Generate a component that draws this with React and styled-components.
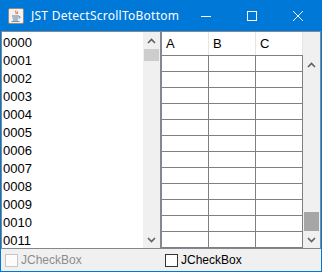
import React from "react";
import styled, { createGlobalStyle } from "styled-components";

const GlobalStyle = createGlobalStyle`
  html, body {
    margin: 0;
    padding: 0;
    background: #0078d7;
  }
  * {
    box-sizing: border-box;
  }
`;

const Frame = styled.div`
  width: 322px;
  height: 272px;
  border: 1px solid #0078d7;
  border-top: none;
  display: flex;
  flex-direction: column;
  background: #f0f0f0;
  font-family: "Liberation Sans", Arial, sans-serif;
`;

const TitleBar = styled.div`
  height: 31px;
  background: #0078d7;
  display: flex;
  align-items: center;
  color: #fff;
`;

const AppIcon = styled.div`
  width: 16px;
  height: 16px;
  margin: 0 7px 0 7px;
  display: flex;
`;

const Title = styled.div`
  flex: 1;
  font-family: "Noto Sans", "Open Sans", sans-serif;
  font-size: 12px;
  letter-spacing: 0.25px;
  white-space: nowrap;
  padding-bottom: 1px;
`;

const CaptionButton = styled.div`
  width: 46px;
  height: 31px;
  display: flex;
  align-items: center;
  justify-content: center;
`;

const Body = styled.div`
  flex: 1;
  display: flex;
  flex-direction: column;
`;

const Panes = styled.div`
  height: 218px;
  display: grid;
  grid-template-columns: 160px 160px;
`;

const ScrollPane = styled.div`
  border: 1px solid #828790;
  display: flex;
  overflow: hidden;
`;

const List = styled.div`
  flex: 1;
  background: #fff;
  overflow: hidden;
`;

const ListRow = styled.div`
  height: 18px;
  padding: 4px 0 0 1px;
  line-height: 14px;
  font-size: 13px;
  color: #000;
`;

const ScrollBar = styled.div`
  width: 17px;
  display: flex;
  flex-direction: column;
  background: #f0f0f0;
`;

const ArrowButton = styled.div`
  height: 17px;
  display: flex;
  align-items: center;
  justify-content: center;
`;

const Track = styled.div`
  flex: 1;
  display: flex;
  flex-direction: column;
  justify-content: ${(p) => (p.$atEnd ? "flex-end" : "flex-start")};
  padding: 0 1px;
`;

const Thumb = styled.div`
  height: ${(p) => p.$size}px;
  background: ${(p) => p.$color};
`;

const TableArea = styled.div`
  flex: 1;
  display: flex;
  flex-direction: column;
  overflow: hidden;
`;

const Header = styled.div`
  height: 24px;
  display: grid;
  grid-template-columns: 47px 47px 47px;
  background: #fff;
  border-bottom: 1px solid #808080;
`;

const HeaderCell = styled.div`
  padding-left: 4px;
  line-height: 23px;
  font-size: 13px;
  color: #000;
  border-right: 1px solid #e5e5e5;
`;

const Grid = styled.div`
  flex: 1;
  display: flex;
  flex-direction: column;
  justify-content: flex-end;
  background: #fff;
  overflow: hidden;
`;

const TableRow = styled.div`
  flex: none;
  height: 16px;
  display: grid;
  grid-template-columns: 47px 47px 47px;
  border-bottom: 1px solid #808080;
`;

const Cell = styled.div`
  border-right: 1px solid #808080;
`;

const Corner = styled.div`
  height: 24px;
`;

const Footer = styled.div`
  flex: 1;
  display: grid;
  grid-template-columns: 160px 160px;
`;

const CheckLabel = styled.label`
  display: flex;
  align-items: center;
  gap: 3px;
  padding-left: 4px;
  font-size: 12px;
  color: ${(p) => (p.$disabled ? "#8d8d8d" : "#000")};
`;

const Box = styled.span`
  width: 13px;
  height: 13px;
  border: 1px solid ${(p) => (p.$disabled ? "#c6c6c6" : "#333")};
  background: ${(p) => (p.$disabled ? "#fcfcfc" : "#fff")};
`;

const Chevron = ({ up }) => (
  <svg width="9" height="6" viewBox="0 0 9 6">
    <polyline
      points={up ? "1,5 4.5,1.5 8,5" : "1,1 4.5,4.5 8,1"}
      fill="none"
      stroke="#606060"
      strokeWidth="1.6"
    />
  </svg>
);

const JavaCup = () => (
  <svg width="16" height="16" viewBox="0 0 16 16">
    <rect x="0.5" y="0.5" width="15" height="15" rx="1.5" fill="#f2f2f2" stroke="#8c8c8c" />
    <path d="M8 2.5c-1.5 1.3 1.2 2 0 3.6M9.6 3.4c-1 0.9 0.6 1.3 -0.3 2.4" fill="none" stroke="#e2571e" strokeWidth="1" />
    <path d="M4 8h7M4.5 10h6M5 12h5" fill="none" stroke="#5b7fa6" strokeWidth="1" />
    <path d="M11 8.3c1.6 0 1.6 2 0 2" fill="none" stroke="#5b7fa6" strokeWidth="0.9" />
    <path d="M3.5 13.5h8" fill="none" stroke="#8a8a8a" strokeWidth="1" />
  </svg>
);

const items = Array.from({ length: 12 }, (_, i) => String(i).padStart(4, "0"));
const rows = Array.from({ length: 12 }, (_, i) => i);

export default function App() {
  return (
    <>
      <GlobalStyle />
      <Frame>
        <TitleBar>
          <AppIcon>
            <JavaCup />
          </AppIcon>
          <Title>JST DetectScrollToBottom</Title>
          <CaptionButton>
            <svg width="10" height="10" viewBox="0 0 10 10">
              <path d="M0 5.5h10" stroke="#fff" strokeWidth="1" />
            </svg>
          </CaptionButton>
          <CaptionButton>
            <svg width="10" height="10" viewBox="0 0 10 10">
              <rect x="0.5" y="0.5" width="9" height="9" fill="none" stroke="#fff" strokeWidth="1" />
            </svg>
          </CaptionButton>
          <CaptionButton>
            <svg width="10" height="10" viewBox="0 0 10 10">
              <path d="M0 0L10 10M10 0L0 10" stroke="#fff" strokeWidth="1" />
            </svg>
          </CaptionButton>
        </TitleBar>
        <Body>
          <Panes>
            <ScrollPane>
              <List>
                {items.map((t) => (
                  <ListRow key={t}>{t}</ListRow>
                ))}
              </List>
              <ScrollBar>
                <ArrowButton>
                  <Chevron up />
                </ArrowButton>
                <Track>
                  <Thumb $size={12} $color="#cdcdcd" />
                </Track>
                <ArrowButton>
                  <Chevron />
                </ArrowButton>
              </ScrollBar>
            </ScrollPane>
            <ScrollPane>
              <TableArea>
                <Header>
                  <HeaderCell>A</HeaderCell>
                  <HeaderCell>B</HeaderCell>
                  <HeaderCell>C</HeaderCell>
                </Header>
                <Grid>
                  {rows.map((r) => (
                    <TableRow key={r}>
                      <Cell />
                      <Cell />
                      <Cell />
                    </TableRow>
                  ))}
                </Grid>
              </TableArea>
              <ScrollBar>
                <Corner />
                <ArrowButton>
                  <Chevron up />
                </ArrowButton>
                <Track $atEnd>
                  <Thumb $size={19} $color="#a6a6a6" />
                </Track>
                <ArrowButton>
                  <Chevron />
                </ArrowButton>
              </ScrollBar>
            </ScrollPane>
          </Panes>
          <Footer>
            <CheckLabel $disabled>
              <Box $disabled />
              JCheckBox
            </CheckLabel>
            <CheckLabel>
              <Box />
              JCheckBox
            </CheckLabel>
          </Footer>
        </Body>
      </Frame>
    </>
  );
}
